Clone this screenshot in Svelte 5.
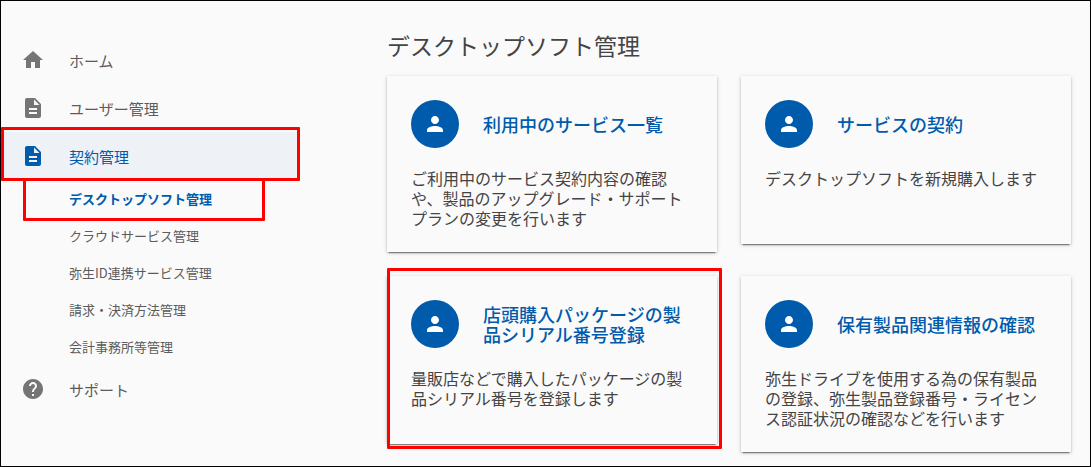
<script>
	const icons = {
		home: 'M10 20v-6h4v6h5v-8h3L12 3 2 12h3v8z',
		doc: 'M14 2H6c-1.1 0-1.99.9-1.99 2L4 20c0 1.1.89 2 1.99 2H18c1.1 0 2-.9 2-2V8l-6-6zm2 16H8v-2h8v2zm0-4H8v-2h8v2zm-3-5V3.5L18.5 9H13z',
		help: 'M12 2C6.48 2 2 6.48 2 12s4.48 10 10 10 10-4.48 10-10S17.52 2 12 2zm1 17h-2v-2h2v2zm2.07-7.75l-.9.92C13.45 12.9 13 13.5 13 15h-2v-.5c0-1.1.45-2.1 1.17-2.83l1.24-1.26c.37-.36.59-.86.59-1.41 0-1.1-.9-2-2-2s-2 .9-2 2H8c0-2.21 1.79-4 4-4s4 1.79 4 4c0 .88-.36 1.68-.93 2.25z',
		person: 'M12 12c2.21 0 4-1.79 4-4s-1.79-4-4-4-4 1.79-4 4 1.79 4 4 4zm0 2c-2.67 0-8 1.34-8 4v2h16v-2c0-2.66-5.33-4-8-4z'
	};

	const menu = [
		{ label: 'ホーム', icon: icons.home },
		{ label: 'ユーザー管理', icon: icons.doc },
		{
			label: '契約管理',
			icon: icons.doc,
			active: true,
			children: [
				{ label: 'デスクトップソフト管理', active: true },
				{ label: 'クラウドサービス管理' },
				{ label: '弥生ID連携サービス管理' },
				{ label: '請求・決済方法管理' },
				{ label: '会計事務所等管理' }
			]
		},
		{ label: 'サポート', icon: icons.help }
	];

	const cards = [
		{
			title: '利用中のサービス一覧',
			text: 'ご利用中のサービス契約内容の確認や、製品のアップグレード・サポートプランの変更を行います'
		},
		{ title: 'サービスの契約', text: 'デスクトップソフトを新規購入します' },
		{
			title: '店頭購入パッケージの製品シリアル番号登録',
			text: '量販店などで購入したパッケージの製品シリアル番号を登録します',
			marked: true
		},
		{
			title: '保有製品関連情報の確認',
			text: '弥生ドライブを使用する為の保有製品の登録、弥生製品登録番号・ライセンス認証状況の確認などを行います'
		}
	];
</script>

<div class="page">
	<nav class="sidebar">
		<ul>
			{#each menu as item}
				<li>
					<a class="item" class:active={item.active} href="#top">
						<svg viewBox="0 0 24 24" aria-hidden="true"><path d={item.icon} /></svg>
						{item.label}
					</a>
					{#if item.children}
						<ul>
							{#each item.children as child}
								<li><a class="sub" class:active={child.active} href="#top">{child.label}</a></li>
							{/each}
						</ul>
					{/if}
				</li>
			{/each}
		</ul>
	</nav>

	<main>
		<h1>デスクトップソフト管理</h1>
		<div class="cards">
			{#each cards as card}
				<a class="card" class:marked={card.marked} href="#top">
					<div class="head">
						<span class="avatar">
							<svg viewBox="0 0 24 24" aria-hidden="true"><path d={icons.person} /></svg>
						</span>
						<h2>{card.title}</h2>
					</div>
					<p>{card.text}</p>
				</a>
			{/each}
		</div>
	</main>
</div>

<style>
	:global(body) {
		margin: 0;
		background: #fafafa;
		color: #444;
		font-family: 'Noto Sans CJK JP', sans-serif;
	}

	.page {
		display: flex;
		min-height: 100vh;
		box-sizing: border-box;
		border: 1px solid #000;
	}

	a {
		color: inherit;
		text-decoration: none;
	}

	ul {
		margin: 0;
		padding: 0;
		list-style: none;
	}

	.sidebar {
		flex: 0 0 298px;
		padding-top: 35px;
		color: #5c5c5c;
	}

	.item,
	.sub {
		position: relative;
		display: flex;
		align-items: center;
	}

	.item {
		height: 48px;
		gap: 24px;
		padding-left: 20px;
		font-size: 15px;
	}

	.sub {
		height: 37px;
		padding-left: 68px;
		font-size: 13px;
	}

	.item svg {
		width: 24px;
		height: 24px;
		fill: #757575;
	}

	.active {
		color: #005bac;
	}

	.item.active {
		background: #eef2f7;
	}

	.item.active svg {
		fill: #005bac;
	}

	.sub.active {
		font-weight: 700;
	}

	/* red callout frames drawn over the highlighted entries */
	.item.active::after,
	.sub.active::after,
	.marked::after {
		content: '';
		position: absolute;
		border: 3px solid #f00;
		border-radius: 1px;
		pointer-events: none;
	}

	.item.active::after {
		inset: -5px -1px -1px 0;
	}

	.sub.active::after {
		inset: -2px 34px -4px 22px;
	}

	.marked::after {
		inset: -8px -5px -5px 0;
	}

	main {
		flex: 1;
		min-width: 0;
		padding: 28px 19px 14px 88px;
	}

	h1 {
		margin: 0 0 15px;
		font-size: 23px;
		font-weight: 400;
		line-height: 32px;
	}

	.cards {
		display: grid;
		grid-template-columns: repeat(auto-fill, minmax(300px, 1fr));
		gap: 24px;
		align-items: start;
	}

	.card {
		position: relative;
		min-height: 168px;
		box-sizing: border-box;
		padding: 24px;
		box-shadow:
			0 3px 1px -2px rgba(0, 0, 0, 0.35),
			0 1px 2px rgba(0, 0, 0, 0.22),
			0 1px 5px rgba(0, 0, 0, 0.12);
		background: #fafafa;
	}

	.head {
		display: flex;
		align-items: center;
		gap: 24px;
	}

	.avatar {
		display: flex;
		flex: none;
		align-items: center;
		justify-content: center;
		width: 48px;
		height: 48px;
		border-radius: 50%;
		background: #005bac;
	}

	.avatar svg {
		width: 24px;
		height: 24px;
		fill: #fff;
	}

	h2 {
		margin: 0;
		color: #005bac;
		font-size: 18px;
		font-weight: 500;
		line-height: 20px;
	}

	.card p {
		margin: 20px 0 0;
		font-size: 16px;
		line-height: 20px;
	}
</style>
